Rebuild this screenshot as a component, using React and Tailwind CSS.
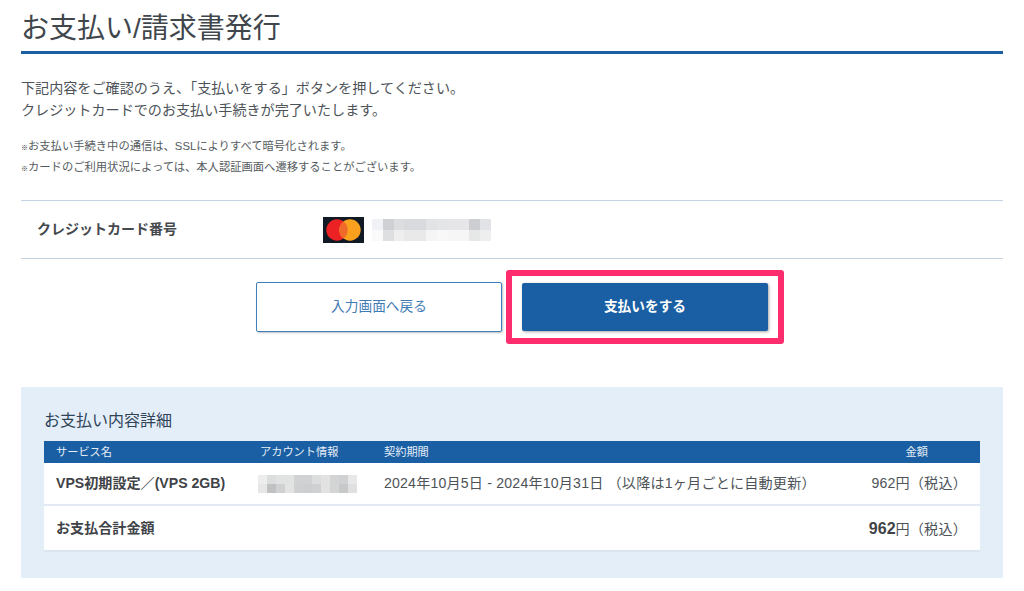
const cardBlur = [
  ["#f1f2f5", "#cfd0d3", "#dcdddf", "#d9dadd", "#d9dadd", "#e2e3e5", "#e4e5e6", "#e6e6e8", "#e6e6e8", "#cdced1", "#e2e3e6"],
  ["#fafafb", "#dedfe0", "#eeeeef", "#e9e9ea", "#e9e9ea", "#f5f5f5", "#f8f8f8", "#f6f6f6", "#f6f6f6", "#e6e7e7", "#eeeeef"],
]

const accountBlur = [
  ["#eceded", "#dcdddd", "#e1e2e2", "#e1e2e2", "#d1d2d3", "#d1d2d3", "#dcdddd", "#e1e2e1", "#d3d4d5", "#d0d1d2", "#e8e8e8"],
  ["#e6e6e7", "#bfc1c3", "#d0d1d2", "#e3e3e3", "#cfd0d1", "#cdcecf", "#cfd0d1", "#e1e2e1", "#d4d5d5", "#c7c8ca", "#e0e0e1"],
]

function Mosaic({ rows, cellW, cellH, className }) {
  return (
    <svg className={className} width={rows[0].length * cellW} height={rows.length * cellH} shapeRendering="crispEdges">
      {rows.map((row, y) =>
        row.map((color, x) => (
          <rect key={`${x}-${y}`} x={x * cellW} y={y * cellH} width={cellW} height={cellH} fill={color} />
        ))
      )}
    </svg>
  )
}

function MastercardLogo() {
  return (
    <svg width="41" height="26" viewBox="0 0 41 26" className="shrink-0">
      <rect width="41" height="26" fill="#111a24" />
      <circle cx="14" cy="13" r="10.7" fill="#eb2124" />
      <circle cx="27" cy="13" r="10.7" fill="#f9a11f" />
      <path d="M20.5 4.5a10.7 10.7 0 0 1 0 17a10.7 10.7 0 0 1 0-17z" fill="#f0682a" />
    </svg>
  )
}

export default function App() {
  return (
    <div className="h-[591px] overflow-hidden bg-white px-[21px] pt-[12px] text-[#444a50] font-['Liberation_Sans','Noto_Sans_CJK_JP',sans-serif]">
      <h1 className="h-[42px] border-b-[3px] border-[#1a5fa3] text-[28px] leading-[34px] font-normal text-[#3f464c]">
        お支払い/請求書発行
      </h1>

      <p className="mt-[23px] text-[14.1px] leading-[22px] text-[#4d5358]">
        下記内容をご確認のうえ、「支払いをする」ボタンを押してください。
        <br />
        クレジットカードでのお支払い手続きが完了いたします。
      </p>

      <ul className="mt-[15px] text-[11.3px] leading-[21px] text-[#555b60]">
        <li className="h-[21px]">
          <span className="text-[7px] font-bold text-[#333]">※</span>お支払い手続き中の通信は、SSLによりすべて暗号化されます。
        </li>
        <li className="h-[21px]">
          <span className="text-[7px] font-bold text-[#333]">※</span>カードのご利用状況によっては、本人認証画面へ遷移することがございます。
        </li>
      </ul>

      <div className="mt-[22px] flex h-[59px] items-center border-y border-[#c3d3e2] pl-[16px]">
        <div className="w-[286px] text-[14px] font-bold text-[#45494e]">クレジットカード番号</div>
        <MastercardLogo />
        <Mosaic rows={cardBlur} cellW={10.8} cellH={11} className="ml-[8px]" />
      </div>

      <div className="mt-[11px] flex items-center pl-[235px]">
        <a className="flex h-[50px] w-[246px] items-center justify-center rounded-[2px] border border-[#3f7fbb] text-[13.7px] text-[#3f7cb5] shadow-[1px_1px_2px_rgba(0,0,0,0.25)]">
          入力画面へ戻る
        </a>
        <div className="ml-[4px] rounded-[3px] border-[6px] border-[#ff2d6e] px-[10px] py-[7px]">
          <a className="flex h-[48px] w-[246px] items-center justify-center rounded-[2px] bg-[#1a5fa3] text-[13.7px] font-bold text-white shadow-[1px_1px_3px_rgba(0,0,0,0.35)]">
            支払いをする
          </a>
        </div>
      </div>

      <section className="mt-[43px] h-[191px] rounded-[1px] bg-[#e4eef9] px-[23px] pt-[23px]">
        <h2 className="text-[16px] leading-[22px] font-normal text-[#2f4358]">お支払い内容詳細</h2>

        <div className="mt-[9px] grid h-[22px] grid-cols-[204px_124px_1fr_auto] items-center bg-[#1a5fa3] pl-[12px] text-[11.2px] text-[#e6eef7]">
          <span>サービス名</span>
          <span>アカウント情報</span>
          <span>契約期間</span>
          <span className="pr-[52px]">金額</span>
        </div>

        <div className="grid h-[43px] grid-cols-[204px_124px_1fr_auto] items-center border-b-2 border-[#e2e9f2] bg-white pl-[12px] text-[14.1px]">
          <span className="whitespace-nowrap font-bold text-[#3f4348]">VPS初期設定／(VPS 2GB)</span>
          <Mosaic rows={accountBlur} cellW={9} cellH={9} className="-ml-[2px]" />
          <span className="whitespace-nowrap tracking-[0.2px] text-[#4d5358]">
            2024年10月5日 - 2024年10月31日 （以降は1ヶ月ごとに自動更新）
          </span>
          <span className="whitespace-nowrap pr-[13px] tracking-[0.2px] text-[#4d5358]">962円（税込）</span>
        </div>

        <div className="flex h-[46px] items-center justify-between border-b-2 border-[#dbe4ef] bg-white pl-[12px] pr-[13px] pt-[1px] text-[14.1px]">
          <span className="font-bold text-[#3f4348]">お支払合計金額</span>
          <span className="tracking-[0.2px] text-[#4d5358]">
            <span className="text-[16px] font-bold tracking-normal text-[#3f4348]">962</span>円（税込）
          </span>
        </div>
      </section>
    </div>
  )
}
